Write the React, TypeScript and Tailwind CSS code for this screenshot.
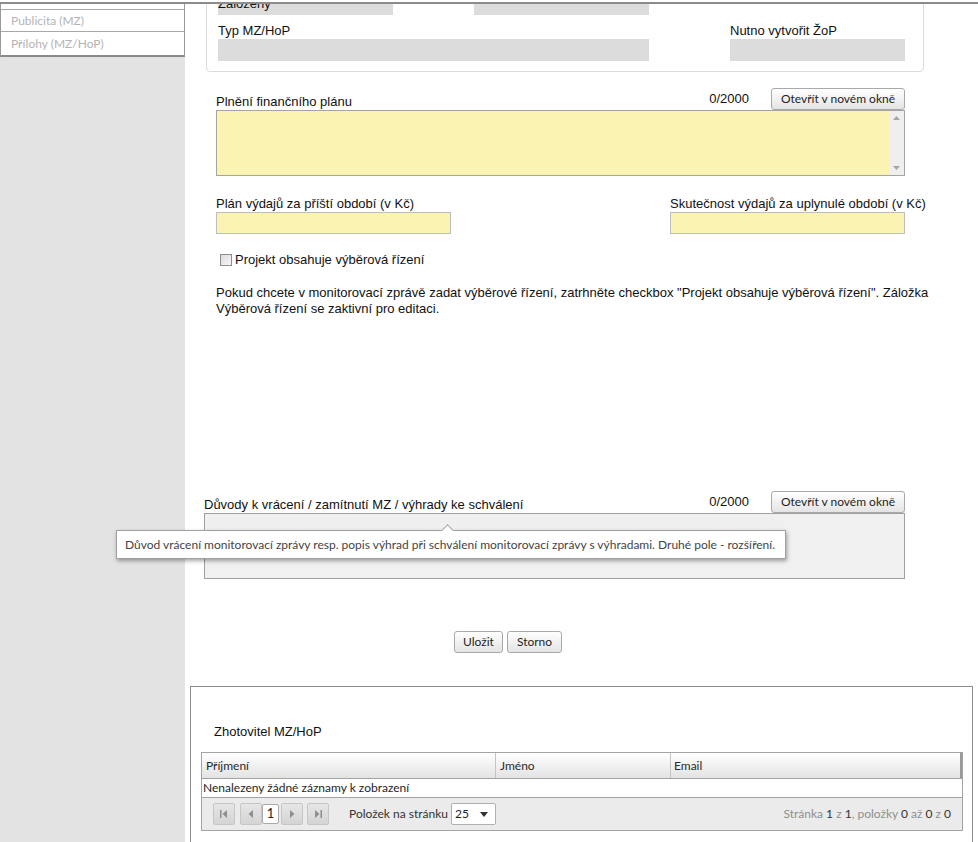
import type { ReactNode } from 'react'

const UI = "font-['Lato','Open_Sans',sans-serif]"

function Btn({ children, className = '' }: { children: ReactNode; className?: string }) {
  return (
    <div
      className={`flex h-[22px] items-center justify-center rounded-[3px] border border-[#a9a9a9] bg-linear-to-b from-white to-[#e4e4e4] text-[12px] text-[#1e1e1e] ${UI} ${className}`}
    >
      {children}
    </div>
  )
}

function Sidebar() {
  return (
    <aside className="w-[185px] shrink-0 bg-[#e3e3e3]">
      <div className={`border-x border-b-2 border-[#9a9a9a] border-b-[#8a8a8a] bg-white text-[12px] text-[#b4b4b4] ${UI}`}>
        <div className="h-[6px] border-b border-[#a8a8a8]" />
        <div className="h-[22px] border-b border-[#a8a8a8] pl-[10px] leading-[21px]">Publicita (MZ)</div>
        <div className="h-[23px] pl-[10px] leading-[23px]">Přílohy (MZ/HoP)</div>
      </div>
    </aside>
  )
}

function Counter() {
  return (
    <div className="flex items-center">
      <span className="leading-[16px]">0/2000</span>
      <Btn className="ml-[22px] w-[134px]">Otevřít v novém okně</Btn>
    </div>
  )
}

function Arrow({ dir }: { dir: 'up' | 'down' }) {
  return (
    <svg width="7" height="4" viewBox="0 0 7 4">
      <path d={dir === 'up' ? 'M0 4 L3.5 0 L7 4 Z' : 'M0 0 L3.5 4 L7 0 Z'} fill="#a6a6a6" />
    </svg>
  )
}

function PagerIcon({ kind }: { kind: 'first' | 'prev' | 'next' | 'last' }) {
  const paths: Record<string, ReactNode> = {
    first: (
      <>
        <rect x="1" y="1" width="1.5" height="8" fill="#8e8e8e" />
        <path d="M8 1 L3.5 5 L8 9 Z" fill="#8e8e8e" />
      </>
    ),
    prev: <path d="M7 1 L2.5 5 L7 9 Z" fill="#8e8e8e" />,
    next: <path d="M3 1 L7.5 5 L3 9 Z" fill="#8e8e8e" />,
    last: (
      <>
        <path d="M2 1 L6.5 5 L2 9 Z" fill="#8e8e8e" />
        <rect x="7.5" y="1" width="1.5" height="8" fill="#8e8e8e" />
      </>
    ),
  }
  return (
    <div className="flex h-[22px] w-[22px] items-center justify-center rounded-[2px] border border-[#c6c6c6] bg-linear-to-b from-[#e6e6e6] to-[#d4d4d4]">
      <svg width="10" height="10" viewBox="0 0 10 10">
        {paths[kind]}
      </svg>
    </div>
  )
}

function Main() {
  return (
    <main className="flex-1 overflow-hidden bg-white">
      {/* detail box (scrolled) */}
      <div className="mt-[-19px] ml-[21px] w-[718px] rounded-b-[4px] border border-[#dcdcdc] px-[11px] pt-[10px] pb-[10px]">
        <div className="grid grid-cols-[175px_175px_175px] gap-x-[81px] gap-y-[8px]">
          <div>
            <div className="relative leading-[16px]">Založeny</div>
            <div className="-mt-[19px] h-[22px] bg-[#dcdcdc]" />
          </div>
          <div>
            <div className="h-[16px]" />
            <div className="-mt-[19px] h-[22px] bg-[#dcdcdc]" />
          </div>
          <div />
          <div className="col-span-2">
            <div className="leading-[16px]">Typ MZ/HoP</div>
            <div className="h-[22px] bg-[#dcdcdc]" />
          </div>
          <div>
            <div className="leading-[16px]">Nutno vytvořit ŽoP</div>
            <div className="h-[22px] bg-[#dcdcdc]" />
          </div>
        </div>
      </div>

      <div className="mt-[16px] ml-[31px] w-[689px]">
        <div className="flex items-end justify-between">
          <span className="leading-[16px]">Plnění finančního plánu</span>
          <Counter />
        </div>
        <div className="flex h-[66px] border border-[#a4a4a4] bg-[#faf3b1]">
          <div className="flex-1" />
          <div className="flex w-[15px] flex-col items-center justify-between bg-[#efefef] py-[5px]">
            <Arrow dir="up" />
            <Arrow dir="down" />
          </div>
        </div>

        <div className="mt-[20px] grid grid-cols-[454px_235px]">
          <div>
            <div className="leading-[16px] whitespace-nowrap">Plán výdajů za příští období (v Kč)</div>
            <div className="h-[22px] w-[235px] border border-[#bdbdbd] bg-[#faf3b1]" />
          </div>
          <div>
            <div className="leading-[16px] whitespace-nowrap">Skutečnost výdajů za uplynulé období (v Kč)</div>
            <div className="h-[22px] w-[235px] border border-[#bdbdbd] bg-[#faf3b1]" />
          </div>
        </div>

        <div className="mt-[18px] flex items-center pl-[4px]">
          <span className="h-[12px] w-[12px] border border-[#8e8e8e] bg-linear-to-br from-[#dcdcdc] to-[#f6f6f6]" />
          <span className="ml-[3px] leading-[16px]">Projekt obsahuje výběrová řízení</span>
        </div>

        <p className="mt-[17px] leading-[16px] whitespace-nowrap">
          Pokud chcete v monitorovací zprávě zadat výběrové řízení, zatrhněte checkbox "Projekt obsahuje výběrová řízení". Záložka
          <br />
          Výběrová řízení se zaktivní pro editaci.
        </p>
      </div>

      <div className="mt-[174px] ml-[19px] w-[701px]">
        <div className="flex items-end justify-between">
          <span className="leading-[16px]">Důvody k vrácení / zamítnutí MZ / výhrady ke schválení</span>
          <Counter />
        </div>
        <div className="h-[66px] border border-[#a0a0a0] bg-[#f0f0f0]" />
      </div>

      <div className="mt-[52px] ml-[269px] flex gap-[4px]">
        <Btn className="w-[49px]">Uložit</Btn>
        <Btn className="w-[55px]">Storno</Btn>
      </div>

      {/* Zhotovitel panel */}
      <div className="mt-[33px] ml-[5px] w-[783px] border border-b-0 border-[#8c8c8c] pt-[37px] pr-[9px] pb-[20px] pl-[10px]">
        <div className="pl-[13px] leading-[16px]">Zhotovitel MZ/HoP</div>
        <div className={`mt-[12px] border border-[#a3a3a3] text-[12px] text-[#2a2a2a] ${UI}`}>
          <div className="flex h-[26px] border-b border-[#a3a3a3] bg-linear-to-b from-white to-[#e3e3e3] leading-[25px]">
            <div className="w-[294px] border-r border-[#c4c4c4] pl-[4px]">Příjmení</div>
            <div className="w-[175px] border-r border-[#c4c4c4] pl-[4px]">Jméno</div>
            <div className="flex-1 border-r-2 border-[#9a9a9a] pl-[3px]">Email</div>
          </div>
          <div className="h-[19px] border-b border-[#a3a3a3] pl-[1px] leading-[18px] text-[#1e1e1e]">
            Nenalezeny žádné záznamy k zobrazení
          </div>
          <div className="flex h-[32px] items-center bg-[#ebebeb] pl-[11px] pr-[11px]">
            <PagerIcon kind="first" />
            <div className="ml-[5px]">
              <PagerIcon kind="prev" />
            </div>
            <div className="flex h-[20px] w-[17px] items-center justify-center rounded-[2px] border border-[#a9a9a9] bg-white text-[13px] text-[#222]">
              1
            </div>
            <div className="ml-[2px]">
              <PagerIcon kind="next" />
            </div>
            <div className="ml-[4px]">
              <PagerIcon kind="last" />
            </div>
            <span className="ml-[20px] text-[#333]">Položek na stránku</span>
            <div className="ml-[3px] flex h-[22px] w-[45px] items-center justify-between rounded-[2px] border border-[#b0b0b0] bg-white pr-[7px] pl-[3px] text-[#222]">
              <span>25</span>
              <svg width="8" height="5" viewBox="0 0 8 5">
                <path d="M0 0 L4 5 L8 0 Z" fill="#333" />
              </svg>
            </div>
            <span className="ml-auto text-[#8f8f8f]">
              Stránka <span className="text-[#333]">1</span> z <span className="text-[#333]">1</span>, položky{' '}
              <span className="text-[#333]">0</span> až <span className="text-[#333]">0</span> z{' '}
              <span className="text-[#333]">0</span>
            </span>
          </div>
        </div>
      </div>
    </main>
  )
}

export default function App() {
  return (
    <div className="relative h-[842px] w-[978px] overflow-hidden bg-white font-['Liberation_Sans',Arial,sans-serif] text-[13px] text-[#111]">
      <div className="h-[2px] bg-white" />
      <div className="h-[2px] bg-[#8c8c8c]" />
      <div className="flex h-[838px]">
        <Sidebar />
        <Main />
      </div>

      {/* tooltip */}
      <div
        className={`absolute top-[530px] left-[116px] h-[29px] w-[670px] border border-[#a0a0a0] bg-white pl-[8px] text-[12px] leading-[27px] text-[#444] shadow-[1px_2px_4px_rgba(0,0,0,0.35)] ${UI}`}
      >
        <span className="absolute top-[-5px] left-[326px] h-[9px] w-[9px] rotate-45 border-t border-l border-[#a0a0a0] bg-white" />
        Důvod vrácení monitorovací zprávy resp. popis výhrad při schválení monitorovací zprávy s výhradami. Druhé pole - rozšíření.
      </div>
    </div>
  )
}
